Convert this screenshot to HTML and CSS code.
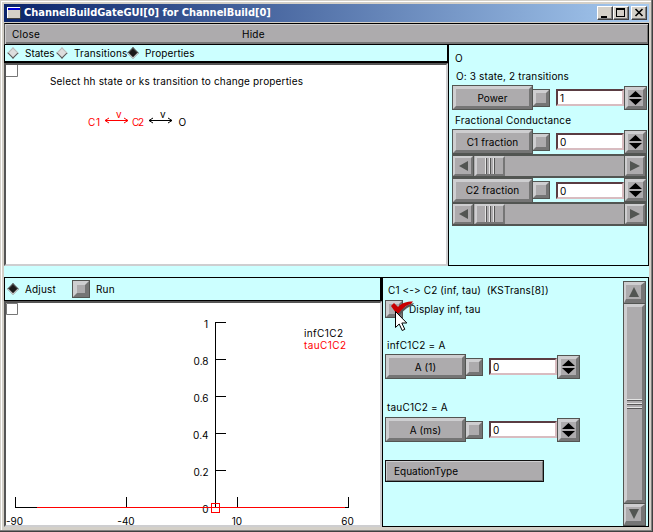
FILE: index.html
```html
<!DOCTYPE html>
<html lang="en">
<head>
<meta charset="utf-8">
<title>ChannelBuildGateGUI[0] for ChannelBuild[0]</title>
<link rel="stylesheet" href="styles.css">
</head>
<body>
<div class="window">
  <header class="titlebar">
    <svg class="appicon" width="14" height="12" shape-rendering="crispEdges"><path fill="#fff" d="M0 0h14v12H0z"/><path fill="#d4d0c8" d="M1 3h12v8H1z"/><path fill="#0000d8" d="M1 1h12v2H1z"/><path fill="#404040" d="M13 0h1v12H0v-1h13z"/></svg>
    <h1>ChannelBuildGateGUI[0] for ChannelBuild[0]</h1>
    <button class="cap"><svg width="14" height="12" shape-rendering="crispEdges"><path d="M3 9h6v2H3z"/></svg></button>
    <button class="cap"><svg width="14" height="12" shape-rendering="crispEdges"><path fill-rule="evenodd" d="M2 1h9v9H2zM3 3v6h7V3z"/></svg></button>
    <button class="cap close"><svg width="14" height="12"><path d="M3.500 2l7 7M10.500 2l-7 7" stroke="#000" stroke-width="1.600"/></svg></button>
  </header>
  <nav class="menubar"><span class="m1">Close</span><span class="m2">Hide</span></nav>
  <main>
    <section class="top">
      <div class="left">
        <div class="radios">
          <i class="dia"></i><span class="r1">States</span>
          <i class="dia"></i><span class="r2">Transitions</span>
          <i class="dia on"></i><span class="r3">Properties</span>
        </div>
        <div class="canvas">
          <svg width="440" height="199" viewBox="6 65 440 199">
            <path d="M5.500 64.500h12v12h-12z" fill="#fff" stroke="#777"/>
            <text x="50" y="85" textLength="253">Select hh state or ks transition to change properties</text>
            <g fill="#f00" stroke="none">
              <text x="88" y="126" textLength="12">C1</text><text x="132" y="126" textLength="12">C2</text>
              <text x="116" y="118" textLength="6">v</text>
            </g>
            <text x="160" y="118" textLength="6">v</text><text x="178.500" y="126">O</text>
            <g fill="none" stroke-width="1">
              <path stroke="#f00" d="M105 120.500h23M109 118l-4 2.500 4 2.500M124 118l4 2.500-4 2.500"/>
              <path stroke="#000" d="M149 120.500h23M153 118l-4 2.500 4 2.500M168 118l4 2.500-4 2.500"/>
            </g>
          </svg>
        </div>
      </div>
      <aside class="gate">
        <p class="t-o">O</p>
        <p class="t-sum">O: 3 state, 2 transitions</p>
        <div class="row"><button class="btn">Power</button><button class="chk"></button><div class="field">1</div><button class="spin"><svg width="15" height="16"><path d="M7.500 1l6.500 6H1zM1 9h13l-6.500 6z"/></svg></button></div>
        <p class="t-frac">Fractional Conductance</p>
        <div class="row"><button class="btn">C1 fraction</button><button class="chk"></button><div class="field">0</div><button class="spin"><svg width="15" height="16"><path d="M7.500 1l6.500 6H1zM1 9h13l-6.500 6z"/></svg></button></div>
        <div class="hbar"><button class="arr"><svg width="12" height="12"><path d="M11 1v10L2 6z"/></svg></button><div class="thumb"><i></i><i></i><i></i></div><button class="arr end"><svg width="12" height="12"><path d="M1 1v10l10-5z"/></svg></button></div>
        <div class="row second"><button class="btn">C2 fraction</button><button class="chk"></button><div class="field">0</div><button class="spin"><svg width="15" height="16"><path d="M7.500 1l6.500 6H1zM1 9h13l-6.500 6z"/></svg></button></div>
        <div class="hbar"><button class="arr"><svg width="12" height="12"><path d="M11 1v10L2 6z"/></svg></button><div class="thumb"><i></i><i></i><i></i></div><button class="arr end"><svg width="12" height="12"><path d="M1 1v10l10-5z"/></svg></button></div>
      </aside>
    </section>
    <section class="bottom">
      <div class="plot">
        <div class="runbar"><i class="dia on"></i><span class="adj">Adjust</span><button class="chk run"></button><span class="runlabel">Run</span></div>
        <div class="canvas">
          <svg width="374" height="223" viewBox="6 303 374 223">
            <path d="M6.500 303.500h11v11h-11z" fill="#fff" stroke="#777"/>
            <g text-anchor="end">
              <text x="208" y="328">1</text><text x="208.500" y="365">0.8</text><text x="208.500" y="402">0.6</text><text x="208.500" y="439">0.4</text><text x="208.500" y="476">0.2</text><text x="208.500" y="513">0</text>
            </g>
            <g fill="#000" shape-rendering="crispEdges">
              <path d="M215 322h1v186h-1zM215 322h11v1h-11zM215 359h11v1h-11zM215 396h11v1h-11zM215 433h11v1h-11zM215 470h11v1h-11z"/>
              <path d="M15 507h334v1H15zM15 497h1v10h-1zM126 497h1v10h-1zM237 497h1v10h-1zM348 497h1v10h-1z"/>
            </g>
            <g shape-rendering="crispEdges">
              <rect x="37" y="507" width="308" height="1" fill="#f00"/>
              <path fill="#f00" fill-rule="evenodd" d="M211 503h9v10h-9zM212 504v8h7v-8z"/>
              <rect x="212" y="507" width="7" height="1" fill="#f00"/>
            </g>
            <g text-anchor="middle">
              <text x="14.500" y="525">-90</text><text x="126" y="525">-40</text><text x="237" y="525">10</text><text x="347.500" y="525">60</text>
            </g>
            <text x="304" y="337" textLength="39">infC1C2</text>
            <text x="304" y="349" textLength="42" fill="#f00">tauC1C2</text>
          </svg>
        </div>
      </div>
      <aside class="trans">
        <div class="form">
          <p class="f-head">C1 &lt;-&gt; C2 (inf, tau)&nbsp; (KSTrans[8])</p>
          <div class="display"><button class="chk big">
            <svg class="tick" width="26" height="15"><path fill="#555" d="M6 8l4 4C14 6 19 3 25 2l-2 3c-5 1-9 5-12 9H9z"/><path fill="#c80000" d="M2 5l3-3 4 4c4-4 8-5.500 15-5.500l-2 2.500c-5 1-9 5-12 9H7z"/></svg>
            <svg class="cursor" width="13" height="21"><path fill="#fff" stroke="#000" d="M.5.500v16l3.700-3.500 3 6.500 2.600-1.200-3-6.300h5z"/></svg>
          </button><span>Display inf, tau</span></div>
          <p class="f-inf">infC1C2 = A</p>
          <div class="row"><button class="btn">A (1)</button><button class="chk"></button><div class="field">0</div><button class="spin"><svg width="15" height="16"><path d="M7.500 1l6.500 6H1zM1 9h13l-6.500 6z"/></svg></button></div>
          <p class="f-tau">tauC1C2 = A</p>
          <div class="row"><button class="btn">A (ms)</button><button class="chk"></button><div class="field">0</div><button class="spin"><svg width="15" height="16"><path d="M7.500 1l6.500 6H1zM1 9h13l-6.500 6z"/></svg></button></div>
          <button class="eq">EquationType</button>
        </div>
        <div class="vbar"><button class="arr"><svg width="12" height="12"><path d="M1 11h10L6 1z"/></svg></button><div class="vthumb"><i></i><i></i><i></i></div><button class="arr"><svg width="12" height="12"><path d="M1 1h10L6 11z"/></svg></button></div>
      </aside>
    </section>
  </main>
</div>
</body>
</html>
```
FILE: styles.css
```css
* { box-sizing: border-box; }
body { margin: 0; font: 10px/12px Inter, "Liberation Sans", sans-serif; font-feature-settings: "calt" 0; color: #000; background: #d4d0c8; }
p, h1 { margin: 0; font-weight: normal; font-size: inherit; white-space: pre; }
button { padding: 0; margin: 0; font: inherit; font-feature-settings: inherit; color: inherit; border-radius: 0; }
svg { display: block; flex: none; }
text { font: 10px Inter, "Liberation Sans", sans-serif; }

.window {
  width: 653px; height: 532px; padding: 4px 4px 5px; overflow: hidden;
  background: #d4d0c8;
  box-shadow: inset -1px -1px #404040, inset -2px -2px #808080, inset 1px 1px #d4d0c8, inset 2px 2px #fff;
}
.titlebar {
  display: flex; align-items: center; height: 18px; padding: 0 2px 0 3px;
  background: linear-gradient(90deg, #0a246a, #a6caf0);
}
.titlebar h1 { flex: 1; margin-left: 3px; color: #fff; font: bold 11px/18px "DejaVu Sans Condensed", "DejaVu Sans", sans-serif; letter-spacing: -.03px; }
.cap { width: 16px; height: 14px; background: #d4d0c8; border: 1px solid; border-color: #fff #404040 #404040 #fff; box-shadow: inset -1px -1px #808080; }
.cap.close { margin-left: 2px; }
.menubar {
  display: flex; align-items: center; height: 22px; margin-top: 1px; width: 645px; padding: 0 0 1px 7px;
  background: #adabad; border: 1px solid #000; border-left-color: #555;
  box-shadow: inset 1px 1px #ceced0, inset -1px -2px #757575;
}
.m1 { width: 230px; letter-spacing: .25px; }
.m2 { letter-spacing: .25px; }
main { width: 645px; height: 482px; background: #cff; }
.top, .bottom { display: flex; }
.top { height: 221px; }
.bottom { height: 250px; margin-top: 11px; }
.left { width: 444px; display: flex; flex-direction: column; }
.radios { display: flex; align-items: center; height: 18px; border: solid #000; border-width: 0 1px 2px; padding-left: 2px; }
.dia {
  width: 8px; height: 8px; margin: 0 2px; transform: rotate(45deg); flex: none;
  background: #ddd; border: 1px solid; border-color: #bbb #555 #555 #bbb;
}
.dia.on { background: #1a1a1a; border-color: #555 #ccc #ccc #555; }
.radios span { margin-left: 6px; }
.r1 { width: 31px; }
.r2 { width: 53px; letter-spacing: .15px; }
.r3 { width: 54px; letter-spacing: .1px; }
.canvas { flex: 1; background: #fff; border: 2px solid; border-color: #555 #ceced0 #ceced0 #555; overflow: hidden; }

.gate { width: 201px; border: 1px solid #000; border-top: 0; padding-left: 3px; }
.t-o { padding: 7px 0 0 3px; height: 24px; }
.t-sum { padding: 1px 0 0 4px; height: 16px; letter-spacing: .15px; }
.t-frac { height: 19px; padding: 4px 0 0 3px; letter-spacing: .17px; }
.row { display: flex; align-items: center; height: 25px; }
.gate .row.second { height: 24px; }
.btn, .chk, .spin, .arr {
  flex: none; background: #adabad; border: 3px solid; border-color: #ceced0 #757575 #757575 #ceced0;
  outline: 1px solid #525552; outline-offset: 0;
  display: flex; align-items: center; justify-content: center;
}
.btn { width: 79px; height: 23px; margin: 0 1px; letter-spacing: .1px; }
.chk { width: 16px; height: 16px; margin-right: 7px; }
.field { width: 68px; height: 17px; background: #fff; border: 2px solid; border-color: #5a3c42 #d8bcc0 #d8bcc0 #5a3c42; padding: 1px 0 0 2px; line-height: 12px; }
.spin { width: 21px; height: 22px; margin-left: 1px; }
.hbar { display: flex; width: 195px; height: 24px; background: #adabad; border: 2px solid #525552; border-left-width: 1px; }
.arr { width: 20px; height: 20px; border-width: 2px; fill: #525552; }
.arr.end { margin-left: auto; }
.thumb { width: 30px; height: 20px; margin-left: 2px; border: 2px solid; border-color: #ceced0 #757575 #757575 #ceced0; display: flex; justify-content: center; gap: 2px; }
.thumb i { width: 2px; border-left: 1px solid #e4e4e4; border-right: 1px solid #555; }

.plot { width: 378px; display: flex; flex-direction: column; }
.runbar { display: flex; align-items: center; height: 24px; border: 1px solid #000; border-right-width: 2px; padding-left: 2px; }
.adj { margin-left: 6px; width: 48px; letter-spacing: .15px; }
.run { margin: 0 7px 0 0; border-width: 4px; }
.runlabel { letter-spacing: .15px; }
.trans { display: flex; width: 267px; border: 1px solid #000; padding-left: 2px; }
.form { width: 236px; }
.f-head { padding: 6px 0 0 3px; height: 21px; letter-spacing: .13px; }
.display { display: flex; align-items: center; height: 19px; }
.display span { margin-left: 7px; letter-spacing: .13px; }
.chk.big { position: relative; margin: 0 0 0 1px; }
.tick { position: absolute; left: 0; top: -3px; }
.cursor { position: absolute; left: 6px; top: 7px; z-index: 2; }
.f-inf { padding: 21px 0 0 2px; height: 36px; letter-spacing: .25px; }
.f-tau { padding: 22px 0 0 2px; height: 38px; letter-spacing: .2px; }
.eq { display: block; width: 159px; height: 22px; margin-top: 18px; padding: 0 0 0 7px; text-align: left; background: #adabad; border: 2px solid; border-color: #ceced0 #757575 #757575 #ceced0; outline: 1px solid #111; outline-offset: -1px; }
.vbar { display: flex; flex-direction: column; width: 23px; margin: 3px 0 0 2px; height: 245px; background: #adabad; border: 1px solid #525552; }
.vbar .arr { width: 21px; height: 21px; border-width: 3px 4px 4px 2px; }
.vthumb { flex: 1; margin: 1px 0; border: 3px solid; border-color: #ceced0 #757575 #757575 #ceced0; display: flex; flex-direction: column; align-items: stretch; justify-content: center; gap: 2px; padding-top: 1px; }
.vthumb i { height: 2px; border-top: 1px solid #e4e4e4; border-bottom: 1px solid #555; }
```
